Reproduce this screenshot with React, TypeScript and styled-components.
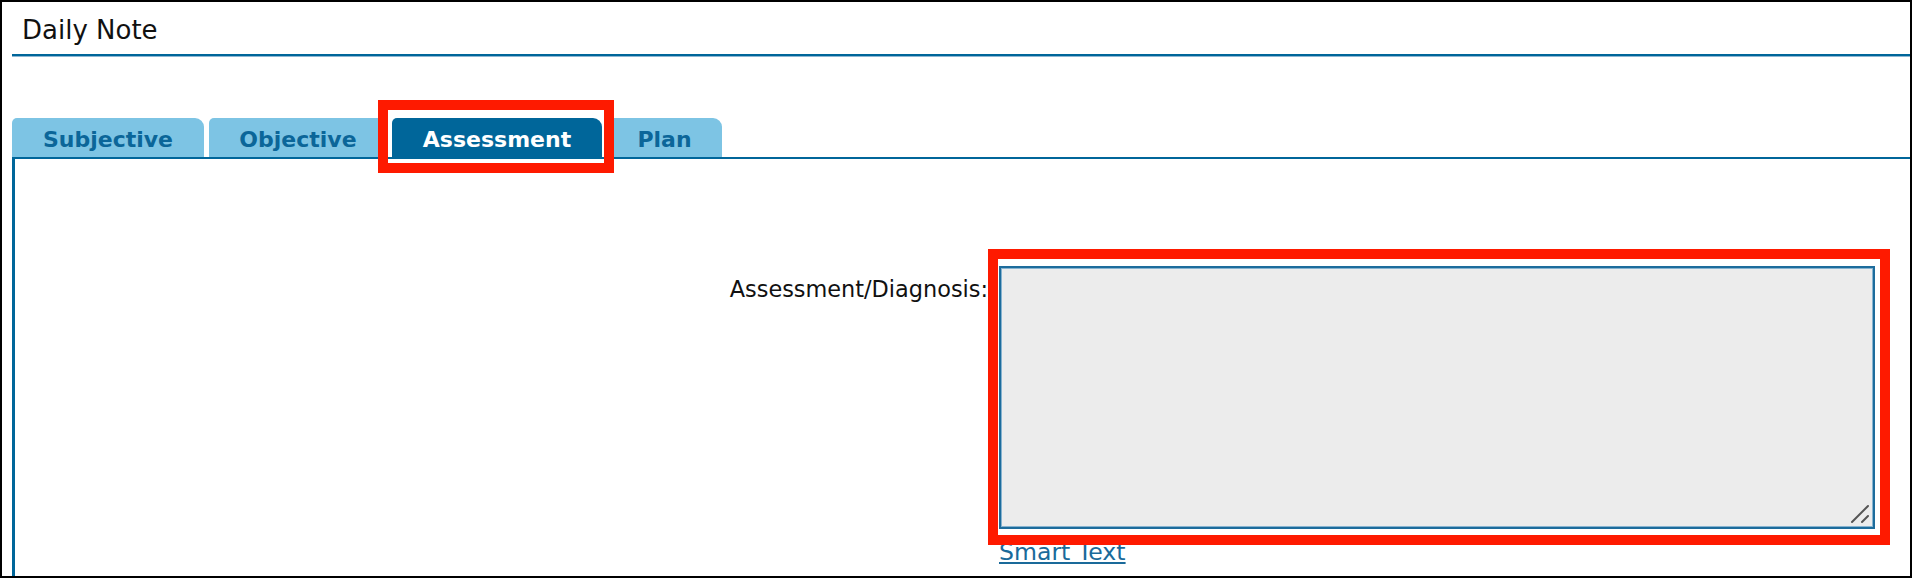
import React, { useState } from 'react';
import styled, { createGlobalStyle } from 'styled-components';

const GlobalStyle = createGlobalStyle`
  html, body {
    margin: 0;
    padding: 0;
    background: #ffffff;
    font-family: 'DejaVu Sans', Verdana, sans-serif;
    overflow: hidden;
  }
`;

const Frame = styled.div`
  width: 1912px;
  height: 578px;
  box-sizing: border-box;
  border: 2px solid #000000;
  padding-left: 10px;
  overflow: hidden;
`;

const Header = styled.div`
  padding: 13px 0 9px 10px;
  font-size: 26px;
  color: #111111;
  border-bottom: 2px solid #00669a;
  box-shadow: 0 1px 0 #8db7d3;
`;

const TabBar = styled.div`
  display: flex;
  align-items: flex-end;
  gap: 5px;
  margin-top: 62px;
`;

const Tab = styled.div<{ $active: boolean; $width: number }>`
  position: relative;
  display: flex;
  align-items: center;
  justify-content: center;
  width: ${p => p.$width}px;
  height: 39px;
  box-sizing: border-box;
  padding-top: 3px;
  border-radius: 5px 9px 0 0;
  font-size: 22px;
  font-weight: bold;
  cursor: pointer;
  background: ${p => (p.$active ? '#00669a' : '#7dc4e4')};
  color: ${p => (p.$active ? '#ffffff' : '#0b6699')};
`;

const Highlight = styled.div<{ $top: number; $right: number; $bottom: number; $left: number }>`
  position: absolute;
  top: ${p => p.$top}px;
  right: ${p => p.$right}px;
  bottom: ${p => p.$bottom}px;
  left: ${p => p.$left}px;
  border: 10px solid #fe1a00;
  pointer-events: none;
  z-index: 2;
`;

const Panel = styled.div`
  border-top: 2px solid #00669a;
  border-left: 3px solid #00669a;
  padding-top: 107px;
  height: 500px;
`;

const FormRow = styled.div`
  display: flex;
  align-items: flex-start;
`;

const Label = styled.label`
  flex: 0 0 973px;
  padding-top: 10px;
  text-align: right;
  font-size: 22.4px;
  color: #111111;
`;

const Field = styled.div`
  margin-left: 11px;
`;

const TextareaWrap = styled.div`
  position: relative;
`;

const NoteArea = styled.textarea`
  display: block;
  width: 876px;
  height: 263px;
  box-sizing: border-box;
  margin: 0;
  padding: 4px;
  background: #ececec;
  border: 2px solid #1d6c9c;
  box-shadow: inset 0 0 0 1px #86b3d0;
  font-family: 'DejaVu Sans', Verdana, sans-serif;
  font-size: 18px;
  outline: none;
  resize: none;
`;

const Grip = styled.svg`
  position: absolute;
  right: 5px;
  bottom: 5px;
  width: 20px;
  height: 20px;
  pointer-events: none;
`;

const SmartLink = styled.a`
  display: inline-block;
  margin-top: 9px;
  font-size: 23.6px;
  color: #1a6a9a;
  text-decoration: underline;
  cursor: pointer;
`;

const tabs = [
  { name: 'Subjective', width: 192 },
  { name: 'Objective', width: 178 },
  { name: 'Assessment', width: 210 },
  { name: 'Plan', width: 115 },
];

const App: React.FC = () => {
  const [active, setActive] = useState('Assessment');

  return (
    <>
      <GlobalStyle />
      <Frame>
        <Header>Daily Note</Header>
        <TabBar>
          {tabs.map(tab => (
            <Tab
              key={tab.name}
              $width={tab.width}
              $active={tab.name === active}
              onClick={() => setActive(tab.name)}
            >
              {tab.name}
              {tab.name === active && <Highlight $top={-18} $right={-12} $bottom={-16} $left={-14} />}
            </Tab>
          ))}
        </TabBar>
        <Panel>
          <FormRow>
            <Label htmlFor="assessment">Assessment/Diagnosis:</Label>
            <Field>
              <TextareaWrap>
                <NoteArea id="assessment" />
                <Grip viewBox="0 0 20 20">
                  <path d="M2 18 L18 2 M12 18 L18 12" stroke="#555555" strokeWidth="2" strokeLinecap="round" fill="none" />
                </Grip>
                <Highlight $top={-17} $right={-15} $bottom={-16} $left={-11} />
              </TextareaWrap>
              <SmartLink>Smart Text</SmartLink>
            </Field>
          </FormRow>
        </Panel>
      </Frame>
    </>
  );
};

export default App;
